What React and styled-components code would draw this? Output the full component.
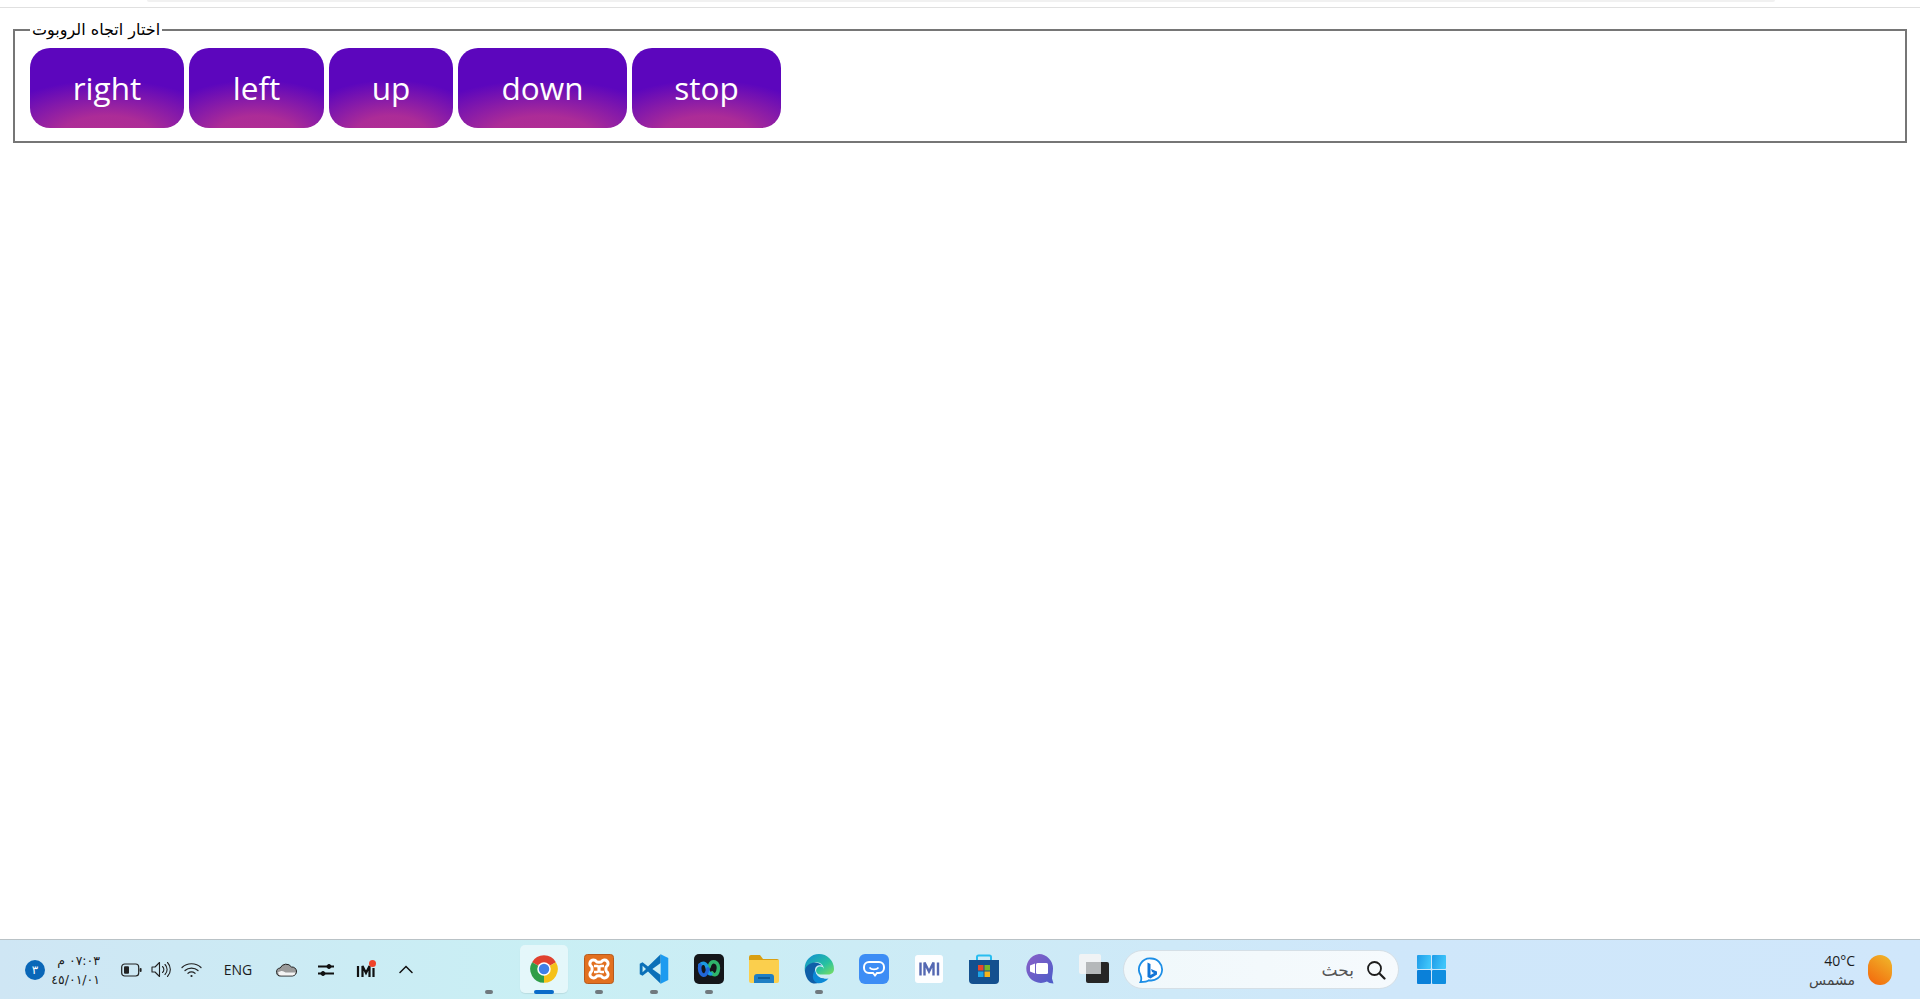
import React from "react";
import styled, { createGlobalStyle, css } from "styled-components";

const Global = createGlobalStyle`
  html, body { margin: 0; padding: 0; background: #fff; overflow: hidden; }
  * { box-sizing: border-box; }
`;

const Page = styled.div`
  width: 1920px;
  height: 999px;
  display: flex;
  flex-direction: column;
`;
const TopBar = styled.div`
  height: 8px;
  flex: none;
  padding: 0 145px 0 147px;
  border-bottom: 1px solid #e0e0e0;
`;
const TopStrip = styled.div`
  height: 2px;
  background: #f1f1f1;
  border-radius: 0 0 6px 6px;
`;
const Main = styled.main`
  flex: 1;
  padding: 12px 13px 0;
`;
const Fieldset = styled.fieldset`
  margin: 0;
  height: 123px;
  border: 2px solid #767676;
  padding: 9px 15px 12px;
  min-width: 0;
`;
const Legend = styled.legend`
  padding: 0 2px;
  font-family: "DejaVu Sans", "Liberation Serif", serif;
  font-size: 16px;
  line-height: 19px;
  color: #000;
  direction: rtl;
`;
const ButtonRow = styled.div`
  display: flex;
  gap: 5px;
`;
const DirButton = styled.button`
  width: ${(p) => p.$w}px;
  height: 80px;
  border: 0;
  border-radius: 20px;
  padding: 0 0 2px;
  color: #fff;
  font-family: "Open Sans", sans-serif;
  font-size: 31.5px;
  background: radial-gradient(ellipse 82% 72% at 50% 112%, #b22e92 0%, #ac2c97 38%, #5c06bd 100%);
`;

const Taskbar = styled.footer`
  flex: none;
  height: 60px;
  display: flex;
  align-items: stretch;
  border-top: 1px solid #b9c2c6;
  background: linear-gradient(90deg, #cfe6f4 0%, #c9eff4 28%, #cdebf6 50%, #cfe7fa 72%, #d0e7fb 100%);
  font-family: "Open Sans", "DejaVu Sans", sans-serif;
  color: #1b1b1b;
  position: relative;
`;
const Tray = styled.div`
  width: 461px;
  flex: none;
  display: flex;
  align-items: center;
  padding-left: 25px;
`;
const Badge = styled.div`
  width: 20px;
  height: 20px;
  border-radius: 50%;
  background: #0a67b8;
  color: #fff;
  font-family: "DejaVu Sans", sans-serif;
  font-size: 12px;
  display: flex;
  align-items: center;
  justify-content: center;
  flex: none;
`;
const Clock = styled.div`
  width: 47px;
  margin-left: 8px;
  margin-right: 16px;
  flex: none;
  font-family: "DejaVu Sans", sans-serif;
  font-size: 12.5px;
  line-height: 19px;
  white-space: nowrap;
  direction: rtl;
  text-align: right;
`;
const TrayIcon = styled.div`
  width: ${(p) => p.$w || 30}px;
  margin-right: ${(p) => p.$mr || 0}px;
  flex: none;
  display: flex;
  justify-content: center;
  align-items: center;
`;
const Lang = styled.div`
  width: 32px;
  margin: 0 22px 0 16px;
  font-size: 14px;
  text-align: center;
  flex: none;
`;
const Apps = styled.div`
  display: flex;
  align-items: stretch;
  flex: none;
`;
const AppSlot = styled.div`
  width: 55px;
  position: relative;
  display: flex;
  align-items: center;
  justify-content: center;
  padding-bottom: 1px;
  ${(p) =>
    p.$active &&
    css`
      &::before {
        content: "";
        position: absolute;
        left: 3.5px;
        top: 5px;
        width: 48px;
        height: 48px;
        border-radius: 5px;
        background: rgba(255, 255, 255, 0.5);
        box-shadow: 0 1px 1px rgba(0, 0, 0, 0.08);
      }
    `}
  & > svg { position: relative; }
`;
const Indicator = styled.span`
  position: absolute;
  left: 50%;
  bottom: 5px;
  transform: translateX(-50%);
  width: ${(p) => (p.$active ? 20 : 8)}px;
  height: 4px;
  border-radius: 2px;
  background: ${(p) => (p.$active ? "#0a6cc9" : "#70797e")};
`;
const Search = styled.div`
  width: 276px;
  height: 39px;
  margin: 10px 0 0 2px;
  flex: none;
  border-radius: 20px;
  border: 1px solid #d5dfe6;
  background: linear-gradient(90deg, #f0f8fb, #f6fafd);
  display: flex;
  align-items: center;
  padding: 0 12px 0 14px;
`;
const SearchText = styled.span`
  margin-left: auto;
  margin-right: 12px;
  font-family: "DejaVu Sans", sans-serif;
  font-size: 17px;
  color: #555;
`;
const StartBtn = styled.div`
  margin-left: 18px;
  flex: none;
  display: flex;
  align-items: center;
`;
const Weather = styled.div`
  margin-left: auto;
  display: flex;
  align-items: center;
  padding-right: 28px;
  gap: 13px;
`;
const WeatherText = styled.div`
  text-align: right;
  font-size: 14px;
  line-height: 20px;
`;
const WeatherSub = styled.div`
  font-family: "DejaVu Sans", sans-serif;
  font-size: 14px;
  color: #444;
  line-height: 18px;
`;

const Chrome = () => (
  <svg width="30" height="30" viewBox="0 0 24 24">
    <path d="M12 12 2.47 6.5A11 11 0 0 1 21.53 6.5Z" fill="#e0412f" />
    <path d="M12 12 21.53 6.5A11 11 0 0 1 12 23Z" fill="#f5c118" />
    <path d="M12 12 12 23A11 11 0 0 1 2.47 6.5Z" fill="#2f9e48" />
    <circle cx="12" cy="12" r="5.4" fill="#fff" />
    <circle cx="12" cy="12" r="4.2" fill="#3f7fe8" />
  </svg>
);
const Xampp = () => (
  <svg width="30" height="30" viewBox="0 0 30 30">
    <rect x=".5" y=".5" width="29" height="29" rx="3" fill="#e2701f" stroke="#b65a1d" />
    <path
      d="M9.500 6a3.600 3.600 0 0 0-2 6.600c.8.500.8 4.300 0 4.800a3.600 3.600 0 1 0 5 5c.5-.8 4.500-.8 5 0a3.600 3.600 0 1 0 5-5c-.8-.5-.8-4.300 0-4.800a3.600 3.600 0 1 0-5-5c-.5.800-4.500.8-5 0A3.600 3.600 0 0 0 9.500 6Z"
      fill="none"
      stroke="#fff"
      strokeWidth="3"
    />
    <path d="M10 12h2.500a2 2 0 0 1 0 6H10M20 12h-2.500a2 2 0 0 0 0 6H20" fill="none" stroke="#fff" strokeWidth="2.400" />
  </svg>
);
const VSCode = () => (
  <svg width="32" height="32" viewBox="0 0 24 24">
    <path d="M17 1 7.5 10.2 3.4 7 1.300 8v8l2.100 1 4.100-3.200L17 23v-6.500L10.800 12 17 7.500Z" fill="#0a70b8" />
    <path d="M3.400 9.600v4.800L6 12Z" fill="#c9eff4" />
    <path d="M17 1 22.700 3.800V20.200L17 23Z" fill="#1d9bf0" />
  </svg>
);
const Webex = () => (
  <svg width="30" height="30" viewBox="0 0 30 30">
    <rect width="30" height="30" rx="5" fill="#14161a" />
    <path d="M15 13c1-4 3-6 6-5s4 5 3 9-4 5-6 2" fill="none" stroke="#2fb56b" strokeWidth="3.600" strokeLinecap="round" />
    <path d="M6 11c3-3 6-2 7 2s1 7 4 7" fill="none" stroke="#1b9ae0" strokeWidth="3.600" strokeLinecap="round" />
    <path d="M6 11c-1 4 0 9 3 10s4-3 5-6" fill="none" stroke="#2166d8" strokeWidth="3.600" strokeLinecap="round" />
  </svg>
);
const Folder = () => (
  <svg width="30" height="28" viewBox="0 0 30 28">
    <path d="M0 2a2 2 0 0 1 2-2h9l3 4h14a2 2 0 0 1 2 2v3H0Z" fill="#d99f12" />
    <path d="M0 5h30v21a2 2 0 0 1-2 2H2a2 2 0 0 1-2-2Z" fill="#fbcf4d" />
    <path d="M5 28v-6a3 3 0 0 1 3-3h14a3 3 0 0 1 3 3v6Z" fill="#1f7fc4" />
    <rect x="9" y="22" width="12" height="2" fill="#0f5c96" />
  </svg>
);
const Edge = () => (
  <svg width="30" height="30" viewBox="0 0 30 30">
    <defs>
      <linearGradient id="edgeTop" x1="0" y1="0" x2="1" y2="1">
        <stop offset="0" stopColor="#0f8bd6" />
        <stop offset=".6" stopColor="#27c1a0" />
        <stop offset="1" stopColor="#7ee05f" />
      </linearGradient>
    </defs>
    <path d="M15 0a15 15 0 0 1 15 15c0 3-2 5.500-6 5.500H16a4 4 0 0 1-3-6.500c2-2.500 7-1.500 7 1.500 0-4-4-8-9-7C6 9.500 2 14 1 18-1 8 6 0 15 0Z" fill="url(#edgeTop)" />
    <path d="M1 18c-.5-4 3-9 9-9.500 3-.2 6 1 8 3-3-1-7 0-7 4.500 0 5 4 9 9.500 8.500-3 3-7 5.500-11 5C5 28.500 2 24 1 18Z" fill="#0f5fa8" />
    <path d="M11 16c.5 6 6 10 13.500 8.500-2.500 3-7 5-10.500 4.700C9 28 7 22 11 16Z" fill="#0c89d6" />
  </svg>
);
const Chat = () => (
  <svg width="30" height="30" viewBox="0 0 30 30">
    <rect width="30" height="30" rx="6" fill="#3d8df5" />
    <path d="M10 8h10a5 5 0 0 1 5 5v1a5 5 0 0 1-5 5h-2l-2 2.500-2-2.500h-4a5 5 0 0 1-5-5v-1a5 5 0 0 1 5-5Z" fill="none" stroke="#fff" strokeWidth="2" />
    <path d="M10.500 13.500c2 2.500 7 2.500 9 0" fill="none" stroke="#fff" strokeWidth="1.800" />
  </svg>
);
const MApp = () => (
  <svg width="28" height="28" viewBox="0 0 28 28">
    <rect width="28" height="28" rx="3" fill="#fdfeff" />
    <path d="M5.500 7.500v13M9.500 20.500v-13l4.500 9 4.500-9v13M23 7.500v13" fill="none" stroke="#5468b2" strokeWidth="2.400" />
  </svg>
);
const Store = () => (
  <svg width="30" height="30" viewBox="0 0 30 30">
    <path d="M8 7V3a1.500 1.500 0 0 1 1.500-1.500h11A1.500 1.500 0 0 1 22 3v4" fill="none" stroke="#28bdf0" strokeWidth="2" />
    <path d="M0 6h30v20a4 4 0 0 1-4 4H4a4 4 0 0 1-4-4Z" fill="#14508f" />
    <rect x="9" y="11" width="5.500" height="5.500" fill="#e9482b" />
    <rect x="15.500" y="11" width="5.500" height="5.500" fill="#79b82a" />
    <rect x="9" y="17.500" width="5.500" height="5.500" fill="#1da5e8" />
    <rect x="15.500" y="17.500" width="5.500" height="5.500" fill="#f5b31a" />
  </svg>
);
const Meet = () => (
  <svg width="30" height="30" viewBox="0 0 30 30">
    <defs>
      <linearGradient id="meetG" x1="0" y1="0" x2="1" y2="1">
        <stop offset="0" stopColor="#8a60c8" />
        <stop offset="1" stopColor="#4c5cc8" />
      </linearGradient>
    </defs>
    <path d="M15 0a14.500 14.500 0 0 1 14 14.500c0 4-1 7-1 10l1.500 5c-3 0-5-1-6.500-2A14.500 14.500 0 1 1 15 0Z" fill="url(#meetG)" />
    <rect x="12" y="9" width="12" height="11" rx="1.500" fill="#fff" />
    <path d="M6 11.500l5-2v10l-5-2Z" fill="#fff" />
  </svg>
);
const TaskView = () => (
  <svg width="30" height="30" viewBox="0 0 30 30">
    <rect x="7" y="8" width="23" height="21" rx="2" fill="#262626" />
    <rect x="0" y="0" width="22" height="20" rx="2" fill="#f4f4f4" fillOpacity=".9" />
    <rect x="7" y="8" width="15" height="12" fill="#b5b8ba" />
  </svg>
);
const Bing = () => (
  <svg width="26" height="26" viewBox="0 0 26 26">
    <path d="M13 1.500a11 11 0 1 1-2 21.800c-2 1.500-5 1.700-8.500 1.700 1-2 1-4.500 0-7A11 11 0 0 1 13 1.500Z" fill="#fff" stroke="#1c8ee6" strokeWidth="1.800" />
    <path d="M9.500 5.500 12.500 7v11l3.500-2-2-1-1-3 6 2.500v3l-6.500 4-3-1.500Z" fill="#1576d6" />
  </svg>
);
const SearchIcon = () => (
  <svg width="20" height="20" viewBox="0 0 20 20" fill="none" stroke="#1c1c1c" strokeWidth="1.800" strokeLinecap="round">
    <circle cx="8.500" cy="8.500" r="6.500" />
    <path d="m13.500 13.500 5 5" strokeWidth="2.200" />
  </svg>
);
const Start = () => (
  <svg width="29" height="29" viewBox="0 0 29 29">
    <defs>
      <linearGradient id="st1" x1="0" y1="0" x2="1" y2="0.300">
        <stop offset="0" stopColor="#1f9be8" />
        <stop offset="1" stopColor="#3ec5fa" />
      </linearGradient>
    </defs>
    <rect x="0" y="0" width="14" height="14" rx="1" fill="url(#st1)" />
    <rect x="15" y="0" width="14" height="14" rx="1" fill="url(#st1)" />
    <rect x="0" y="15" width="14" height="14" rx="1" fill="#0a80d9" />
    <rect x="15" y="15" width="14" height="14" rx="1" fill="#0f8ee0" />
  </svg>
);
const Sun = () => (
  <svg width="24" height="30" viewBox="0 0 24 30">
    <defs>
      <linearGradient id="sunG" x1="0.800" y1="0" x2="0.200" y2="1">
        <stop offset="0" stopColor="#f0b429" />
        <stop offset="1" stopColor="#f36a0d" />
      </linearGradient>
    </defs>
    <rect width="24" height="30" rx="12" fill="url(#sunG)" />
  </svg>
);
const Battery = () => (
  <svg width="21" height="14" viewBox="0 0 21 14" fill="none">
    <rect x=".7" y="1" width="17" height="12" rx="3" stroke="#222" strokeWidth="1.200" />
    <rect x="3" y="3.300" width="5" height="7.400" rx="1" fill="#222" />
    <rect x="18.600" y="5" width="2" height="4" rx="1" fill="#222" />
  </svg>
);
const Volume = () => (
  <svg width="21" height="17" viewBox="0 0 21 17" fill="none" stroke="#222" strokeWidth="1.100" strokeLinecap="round">
    <path d="M1 6h3l4.500-4.500v14L4 11H1Z" strokeLinejoin="round" />
    <path d="M11.500 5.500a4 4 0 0 1 0 6M14 3.500a7 7 0 0 1 0 10M16.500 1.500a10 10 0 0 1 0 14" />
  </svg>
);
const Wifi = () => (
  <svg width="21" height="16" viewBox="0 0 21 16" fill="none" stroke="#222" strokeWidth="1.200" strokeLinecap="round">
    <path d="M1 5.500c5-5 14-5 19 0M4 8.500c3.500-3.200 9.500-3.200 13 0M7 11.300c2-1.500 5-1.500 7 0" />
    <circle cx="10.500" cy="14" r="1.100" fill="#222" stroke="none" />
  </svg>
);
const Cloud = () => (
  <svg width="21" height="15" viewBox="0 0 21 15">
    <path d="M5 14a4 4 0 0 1-.8-8A6.500 6.500 0 0 1 15.500 5 4.500 4.500 0 0 1 16.500 14Z" fill="#9a9a9a" stroke="#222" strokeWidth="1" />
    <path d="M2 10.500c3-2 5-2 7.500 0h10a3.500 3.500 0 0 1-3 3H5a3.500 3.500 0 0 1-3-3Z" fill="#f4f4f4" />
  </svg>
);
const Sliders = () => (
  <svg width="18" height="14" viewBox="0 0 18 14" fill="#111" stroke="#111">
    <path d="M1 3.500h16M1 10.500h16" strokeWidth="2" />
    <circle cx="12" cy="3.500" r="2" />
    <circle cx="6" cy="10.500" r="2" />
  </svg>
);
const TrayM = () => (
  <svg width="20" height="19" viewBox="0 0 20 19">
    <path d="M2 6v11M6.500 17V6l3.500 7 3.500-7v11M17.500 8v9" fill="none" stroke="#111" strokeWidth="2.200" />
    <circle cx="16.500" cy="3.500" r="3.500" fill="#ef4229" />
  </svg>
);
const Chevron = () => (
  <svg width="14" height="9" viewBox="0 0 14 9" fill="none" stroke="#111" strokeWidth="1.500" strokeLinecap="round">
    <path d="M1 7.500 7 1.500l6 6" />
  </svg>
);

const directions = [
  { label: "right", w: 154 },
  { label: "left", w: 135 },
  { label: "up", w: 124 },
  { label: "down", w: 169 },
  { label: "stop", w: 149 },
];

const apps = [
  { key: "blank", dot: true },
  { key: "chrome", icon: <Chrome />, active: true },
  { key: "xampp", icon: <Xampp />, dot: true },
  { key: "vscode", icon: <VSCode />, dot: true },
  { key: "webex", icon: <Webex />, dot: true },
  { key: "folder", icon: <Folder /> },
  { key: "edge", icon: <Edge />, dot: true },
  { key: "chat", icon: <Chat /> },
  { key: "m", icon: <MApp /> },
  { key: "store", icon: <Store /> },
  { key: "meet", icon: <Meet /> },
  { key: "task", icon: <TaskView /> },
];

export default function App() {
  return (
    <Page>
      <Global />
      <TopBar>
        <TopStrip />
      </TopBar>
      <Main>
        <Fieldset>
          <Legend>اختار اتجاه الروبوت</Legend>
          <ButtonRow>
            {directions.map((d) => (
              <DirButton key={d.label} $w={d.w}>
                {d.label}
              </DirButton>
            ))}
          </ButtonRow>
        </Fieldset>
      </Main>
      <Taskbar>
        <Tray>
          <Badge>٣</Badge>
          <Clock>
            <div>٠٧:٠٣ م</div>
            <div>٤٥/٠١/٠١</div>
          </Clock>
          <TrayIcon><Battery /></TrayIcon>
          <TrayIcon><Volume /></TrayIcon>
          <TrayIcon><Wifi /></TrayIcon>
          <Lang>ENG</Lang>
          <TrayIcon $w={21} $mr={20}><Cloud /></TrayIcon>
          <TrayIcon $w={18} $mr={21}><Sliders /></TrayIcon>
          <TrayIcon $w={20} $mr={23}><TrayM /></TrayIcon>
          <TrayIcon $w={14}><Chevron /></TrayIcon>
        </Tray>
        <Apps>
          {apps.map((a) => (
            <AppSlot key={a.key} $active={a.active}>
              {a.icon}
              {(a.dot || a.active) && <Indicator $active={a.active} />}
            </AppSlot>
          ))}
        </Apps>
        <Search>
          <Bing />
          <SearchText>بحث</SearchText>
          <SearchIcon />
        </Search>
        <StartBtn><Start /></StartBtn>
        <Weather>
          <WeatherText>
            <div>40°C</div>
            <WeatherSub>مشمس</WeatherSub>
          </WeatherText>
          <Sun />
        </Weather>
      </Taskbar>
    </Page>
  );
}
